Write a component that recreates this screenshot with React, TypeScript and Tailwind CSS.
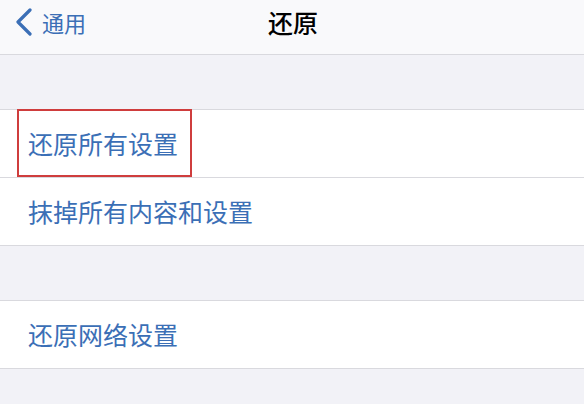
const font = { fontFamily: '"Noto Sans CJK SC", "Noto Sans", sans-serif' };

function Row({ label, highlight }: { label: string; highlight?: boolean }) {
  return (
    <div className="relative flex h-[68px] items-center border-b border-[#d9d9de] bg-white pl-[28px]">
      <span className="text-[25px] leading-none text-[#3b6fb6]">{label}</span>
      {highlight && (
        <div className="absolute left-[17px] top-[-1px] h-[68px] w-[175px] border-[2.5px] border-[#cf3d3d]" />
      )}
    </div>
  );
}

export default function App() {
  return (
    <div className="h-[404px] w-[584px] overflow-hidden bg-[#f2f2f7]" style={font}>
      {/* Nav bar */}
      <div className="relative flex h-[55px] items-center border-b border-[#d9d9de] bg-[#f9f9fb] pb-[10px]">
        <div className="flex items-center pl-[15px]">
          <svg width="18" height="28" viewBox="0 0 18 28" fill="none">
            <path d="M15 2 L3 14 L15 26" stroke="#3b6fb6" strokeWidth="3.2" strokeLinecap="round" strokeLinejoin="round" />
          </svg>
          <span className="ml-[9px] text-[22px] leading-none text-[#3b6fb6]">通用</span>
        </div>
        <div className="absolute inset-x-0 top-0 flex h-full items-center justify-center pb-[10px]">
          <span className="pl-[2px] text-[25px] font-medium leading-none text-black">还原</span>
        </div>
      </div>

      <div className="h-[55px] border-b border-[#d9d9de]" />
      <Row label="还原所有设置" highlight />
      <Row label="抹掉所有内容和设置" />

      <div className="h-[55px] border-b border-[#d9d9de]" />
      <Row label="还原网络设置" />
    </div>
  );
}
